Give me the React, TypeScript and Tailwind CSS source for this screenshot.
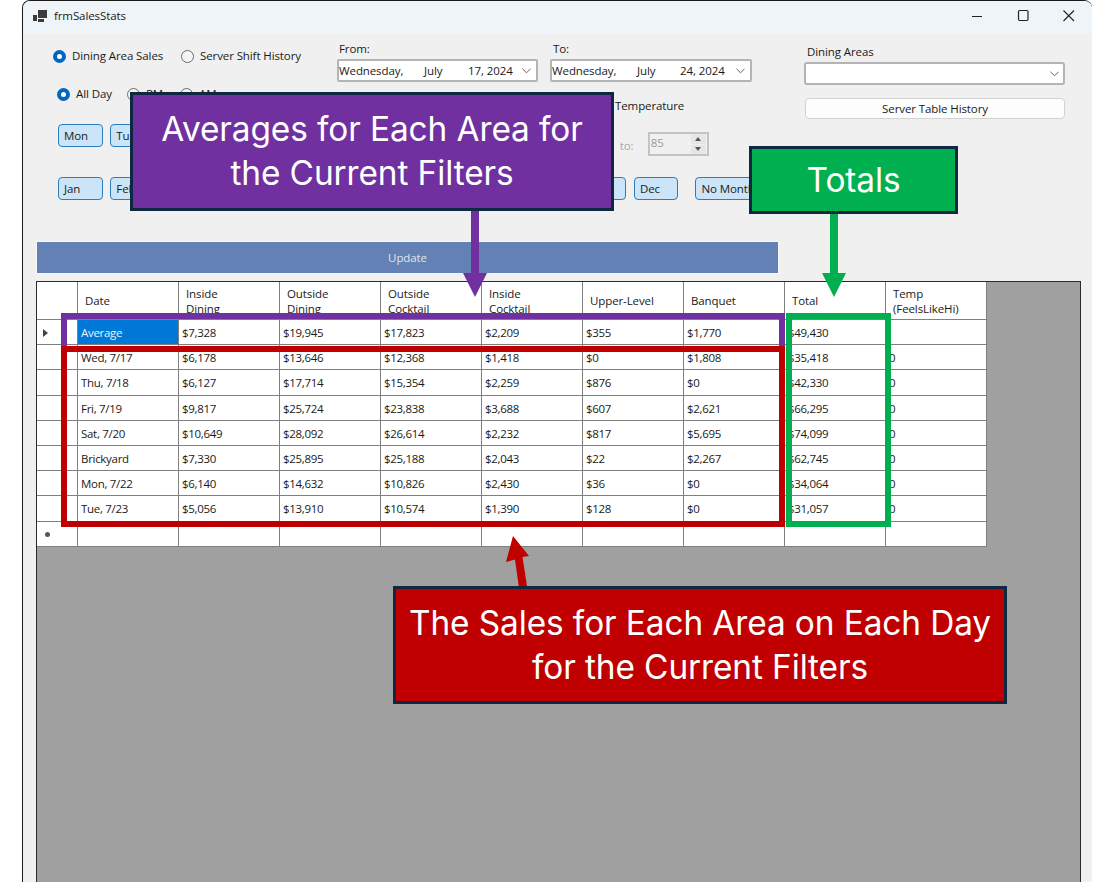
import React from "react";

const days = ["Mon", "Tue", "", "", "", "", ""];
const months = ["Jan", "Feb", "", "", "", "", "", "", "", "", "", "Dec"];
const headers: string[][] = [
  ["Date"],
  ["Inside", "Dining"],
  ["Outside", "Dining"],
  ["Outside", "Cocktail"],
  ["Inside", "Cocktail"],
  ["Upper-Level"],
  ["Banquet"],
  ["Total"],
  ["Temp", "(FeelsLikeHi)"],
];
const rows: string[][] = [
  ["Average", "$7,328", "$19,945", "$17,823", "$2,209", "$355", "$1,770", "$49,430", ""],
  ["Wed, 7/17", "$6,178", "$13,646", "$12,368", "$1,418", "$0", "$1,808", "$35,418", "0"],
  ["Thu, 7/18", "$6,127", "$17,714", "$15,354", "$2,259", "$876", "$0", "$42,330", "0"],
  ["Fri, 7/19", "$9,817", "$25,724", "$23,838", "$3,688", "$607", "$2,621", "$66,295", "0"],
  ["Sat, 7/20", "$10,649", "$28,092", "$26,614", "$2,232", "$817", "$5,695", "$74,099", "0"],
  ["Brickyard", "$7,330", "$25,895", "$25,188", "$2,043", "$22", "$2,267", "$62,745", "0"],
  ["Mon, 7/22", "$6,140", "$14,632", "$10,826", "$2,430", "$36", "$0", "$34,064", "0"],
  ["Tue, 7/23", "$5,056", "$13,910", "$10,574", "$1,390", "$128", "$0", "$31,057", "0"],
  ["", "", "", "", "", "", "", "", ""],
];

function Radio({ checked, label, className }: { checked?: boolean; label: string; className?: string }) {
  return (
    <div className={`flex items-center gap-[6px] h-[18px] shrink-0 ${className ?? ""}`}>
      {checked ? (
        <span className="w-[13px] h-[13px] rounded-full border-[4px] border-[#0067c0] bg-white shrink-0" />
      ) : (
        <span className="w-[13px] h-[13px] rounded-full border border-[#6b6b6b] bg-[#f5f5f5] shrink-0" />
      )}
      <span className="whitespace-nowrap">{label}</span>
    </div>
  );
}

function Chevron({ className }: { className?: string }) {
  return (
    <svg viewBox="0 0 10 6" className={`w-[9px] h-[6px] ${className ?? ""}`} fill="none" stroke="#555" strokeWidth="1">
      <path d="M0.5 0.5 L5 5 L9.5 0.5" />
    </svg>
  );
}

function DateBox({ w, day, month, monthW, rest }: { w: string; day: string; month: string; monthW: string; rest: string }) {
  return (
    <div className={`${w} h-[23px] flex items-center bg-white border-2 border-[#b4b4b4] rounded-[2px] pr-[5px] text-[#1a1a1a]`}>
      <span className="w-[85px] whitespace-nowrap">{day}</span>
      <span className={`${monthW} whitespace-nowrap`}>{month}</span>
      <span className="whitespace-nowrap">{rest}</span>
      <Chevron className="ml-auto" />
    </div>
  );
}

function Toggle({ label, className }: { label: string; className?: string }) {
  return (
    <div className={`h-[23px] bg-[#cce4f7] border-[1.5px] border-[#2f7db8] rounded-[4px] flex items-center pl-[5px] overflow-hidden whitespace-nowrap shrink-0 ${className ?? "w-[44.5px]"}`}>
      {label}
    </div>
  );
}

function WindowIcon() {
  return (
    <svg viewBox="0 0 14 13" className="w-[14px] h-[13px] ml-[10px]" fill="#3c3c3c">
      <rect x="0" y="5" width="4" height="6" />
      <rect x="5" y="0" width="9" height="8" />
      <rect x="5" y="9" width="6" height="3" />
    </svg>
  );
}

function TitleButtons() {
  return (
    <div className="ml-auto flex items-center">
      <svg viewBox="0 0 46 32" className="w-[46px] h-[32px]" fill="none" stroke="#222" strokeWidth="1">
        <path d="M18 16.5 H28" />
      </svg>
      <svg viewBox="0 0 46 32" className="w-[46px] h-[32px]" fill="none" stroke="#222" strokeWidth="1.2">
        <rect x="18.5" y="10.5" width="9.5" height="10" rx="1.2" />
      </svg>
      <svg viewBox="0 0 46 32" className="w-[46px] h-[32px]" fill="none" stroke="#222" strokeWidth="1.1">
        <path d="M17.5 10.5 L28 21 M28 10.5 L17.5 21" />
      </svg>
    </div>
  );
}

function Callout({ className, children }: { className: string; children: React.ReactNode }) {
  return (
    <div className={`absolute flex items-center justify-center text-center text-white border-[3px] border-[#0e2841] font-['Inter',sans-serif] text-[33.4px] leading-[44px] font-normal pb-[1px] ${className}`}>
      {children}
    </div>
  );
}

export default function App() {
  return (
    <div className="relative w-[1114px] h-[883px] bg-white overflow-hidden font-['Open_Sans',sans-serif] text-[11.5px] tracking-[-0.1px] text-[#1a1a1a]">
      <div className="ml-[22px] w-[1070px] h-[882px] flex flex-col border-l-[1.5px] border-t border-[#1a1a1a] rounded-tl-[8px] rounded-tr-[8px] bg-[#f0f0f0] overflow-hidden">
        <div className="h-[33px] shrink-0 bg-[#eff4f9] flex items-center pb-[3px]">
          <WindowIcon />
          <span className="ml-[7px]">frmSalesStats</span>
          <TitleButtons />
        </div>

        <div className="h-[207px] shrink-0 flex">
          <div className="w-[781px] shrink-0">
            <div className="h-[48px] pt-[7px] pl-[30px] flex items-start">
              <div className="w-[284px] mt-[6px] flex shrink-0">
                <Radio checked label="Dining Area Sales" className="w-[128px]" />
                <Radio label="Server Shift History" />
              </div>
              <div className="w-[201px] shrink-0">
                <div className="h-[15px] leading-[15px] pl-[2px] mb-[3px]">From:</div>
                <DateBox w="w-[201px]" day="Wednesday," month="July" monthW="w-[44px]" rest="17, 2024" />
              </div>
              <div className="w-[202px] ml-[12px] shrink-0">
                <div className="h-[15px] leading-[15px] pl-[3px] mb-[3px]">To:</div>
                <DateBox w="w-[202px]" day="Wednesday," month="July" monthW="w-[43px]" rest="24, 2024" />
              </div>
            </div>

            <div className="h-[36px] mt-[3px] pl-[34px] flex items-start">
              <Radio checked label="All Day" className="w-[70px]" />
              <Radio label="PM" className="w-[53px]" />
              <Radio label="AM" className="w-[50px]" />
              <div className="ml-[385px] mt-[13px] h-[16px] leading-[16px] whitespace-nowrap">Temperature</div>
            </div>

            <div className="h-[32px] mt-[3px] pl-[35px] flex items-start">
              <div className="flex gap-[7.86px]">
                {days.map((d, i) => (
                  <Toggle key={i} label={d} />
                ))}
              </div>
              <div className="ml-[203px] mt-[14px] w-[28px] leading-[16px] text-[#a8a8a8]">to:</div>
              <div className="mt-[8px] w-[61px] h-[24px] border-2 border-[#c4c4c4] bg-[#f0f0f0] flex items-start justify-between pl-[1px]">
                <span className="text-[#999] leading-[15px] mt-[1px]">85</span>
                <div className="w-[16px] h-full flex flex-col gap-[1px] pr-[1px]">
                  <div className="flex-1 bg-[#e6e6e6] flex items-center justify-center">
                    <span className="w-0 h-0 border-l-[3.5px] border-r-[3.5px] border-b-[4px] border-l-transparent border-r-transparent border-b-[#555]" />
                  </div>
                  <div className="flex-1 bg-[#e6e6e6] flex items-center justify-center">
                    <span className="w-0 h-0 border-l-[3.5px] border-r-[3.5px] border-t-[4px] border-l-transparent border-r-transparent border-t-[#555]" />
                  </div>
                </div>
              </div>
            </div>

            <div className="mt-[21px] pl-[35px] flex items-start">
              <div className="flex gap-[7.86px]">
                {months.map((m, i) => (
                  <Toggle key={i} label={m} />
                ))}
              </div>
              <Toggle label="No Month" className="w-[85px] ml-[17px]" />
            </div>
          </div>

          <div className="w-[261px] shrink-0 pt-[10px]">
            <div className="h-[15px] leading-[15px] pl-[3px] mb-[3px]">Dining Areas</div>
            <div className="h-[23px] bg-white border-2 border-[#b4b4b4] rounded-[3px] flex items-center justify-end pr-[4px]">
              <Chevron />
            </div>
            <div className="mt-[13px] ml-[1px] h-[21px] bg-[#fdfdfd] border border-[#d2d2d2] rounded-[4px] flex items-center justify-center">
              Server Table History
            </div>
          </div>
        </div>

        <div className="ml-[13px] w-[743px] h-[33px] shrink-0 bg-[#6381b4] border border-[#f7f7f7] flex items-center justify-center text-[#dfe6f1]">
          Update
        </div>

        <div className="mt-[7px] ml-[13px] w-[1045px] flex-1 bg-[#a0a0a0] border-l border-r border-t border-[#2a2a2a]">
          <div className="grid grid-cols-[41px_repeat(9,101px)] grid-rows-[38px_repeat(9,25.2px)] w-[950px] bg-white">
            <div className="border-r border-b border-[#808080]" />
            {headers.map((h) => (
              <div key={h.join()} className="border-r border-b border-[#808080] pl-[7px] pr-[2px] flex flex-col justify-center leading-[15px] overflow-hidden whitespace-nowrap">
                {h.map((l) => (
                  <div key={l}>{l}</div>
                ))}
              </div>
            ))}
            {rows.map((r, i) => (
              <React.Fragment key={i}>
                <div className="border-r border-b border-[#808080] flex items-center pl-[6px] pt-[2px]">
                  {i === 0 && <span className="w-0 h-0 border-t-[4.5px] border-b-[4.5px] border-l-[5px] border-t-transparent border-b-transparent border-l-[#444]" />}
                  {i === 8 && <span className="w-[5px] h-[5px] rounded-full bg-[#555] ml-[2px]" />}
                </div>
                {r.map((c, j) => (
                  <div
                    key={j}
                    className={`border-r border-b border-[#808080] flex items-center overflow-hidden whitespace-nowrap pl-[3px] pt-[1px] tracking-[-0.3px] ${i === 0 && j === 0 ? "bg-[#0078d7] text-[#e8f2fb]" : ""}`}
                  >
                    {c}
                  </div>
                ))}
              </React.Fragment>
            ))}
          </div>
        </div>
      </div>

      <div className="absolute left-[61px] top-[313px] w-[724px] h-[39px] border-[6px] border-[#7030a0]" />
      <div className="absolute left-[61px] top-[346px] w-[724px] h-[181px] border-[6px] border-[#c00000]" />
      <div className="absolute left-[786px] top-[313px] w-[105px] h-[214px] border-[6px] border-[#00b050]" />

      <svg className="absolute left-0 top-0 w-[1114px] h-[883px] pointer-events-none" viewBox="0 0 1114 883">
        <path d="M471 205 H479 V273 H487 L475 297 L463 273 H471 Z" fill="#7030a0" />
        <path d="M830 205 H838 V273 H846 L834 297 L822 273 H830 Z" fill="#00b050" />
        <path d="M519 588 L527 586 L522.5 557 L529 556 L513 536 L506 562 L515 559.5 Z" fill="#c00000" />
      </svg>

      <Callout className="left-[130px] top-[92px] w-[484px] h-[119px] bg-[#7030a0]">
        <div>Averages for Each Area for<br />the Current Filters</div>
      </Callout>
      <Callout className="left-[749px] top-[146px] w-[209px] h-[68px] bg-[#00b050]">Totals</Callout>
      <Callout className="left-[393px] top-[586px] w-[614px] h-[118px] bg-[#c00000]">
        <div>The Sales for Each Area on Each Day<br />for the Current Filters</div>
      </Callout>
    </div>
  );
}
